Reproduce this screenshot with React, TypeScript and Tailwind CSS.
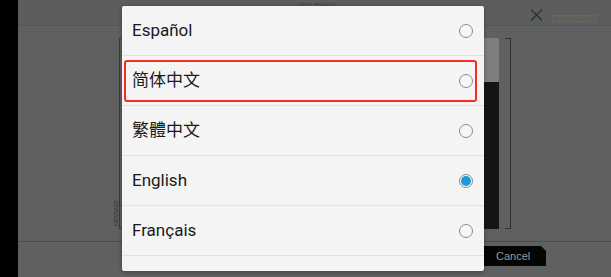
import React from "react";

const langs = [
  { label: "Español", selected: false },
  { label: "简体中文", selected: false, highlight: true },
  { label: "繁體中文", selected: false },
  { label: "English", selected: true },
  { label: "Français", selected: false },
];

function Radio({ selected }: { selected: boolean }) {
  return (
    <span className="w-[14px] h-[14px] rounded-full border border-[#8c8c8c] bg-[#f7f7f7] flex items-center justify-center shrink-0">
      {selected && <span className="w-[10px] h-[10px] rounded-full bg-[#1b9bd7]" />}
    </span>
  );
}

export default function App() {
  return (
    <div
      className="relative w-[611px] h-[277px] overflow-hidden flex"
      style={{ fontFamily: 'Roboto, "Noto Sans CJK SC", sans-serif' }}
    >
      <div className="w-[18px] h-full bg-black shrink-0" />
      <div className="flex-1 h-full flex flex-col bg-[#5f6161]">
        <div className="h-[26px] border-b border-[#545656] bg-[#5c5e5e] relative shrink-0">
          <span className="absolute left-[280px] top-[2px] text-[5px] text-[#3f4141] tracking-tight">DRIZZLEBANDCO</span>
          <svg className="absolute left-[512px] top-[9px]" width="13" height="12" viewBox="0 0 13 12">
            <path d="M1 0.5 L12 11.5 M12 0.5 L1 11.5" stroke="#2c2e2e" strokeWidth="1.1" fill="none" />
          </svg>
          <span className="absolute left-[534px] top-[15px] w-[45px] h-[7px] border border-[#6e6552] text-[5px] leading-[5px] text-[#6e6552] flex items-center justify-center">DRIZZLEBANDCO</span>
        </div>
        <div className="h-[216px] border-b border-[#4b4d4d] pt-[12px] pl-[101px] shrink-0">
          <div className="relative w-[392px] h-[191px] border-l border-[#3a3c3c] flex">
            <span className="absolute left-[-7px] top-[162px] text-[6px] leading-[6px] text-[#353737] [writing-mode:vertical-rl] rotate-180 tracking-tight">MESSAGE</span>
            <div className="absolute left-0 top-0 w-[5px] border-t border-[#3a3c3c]" />
            <div className="absolute left-0 bottom-0 w-[5px] border-b border-[#3a3c3c]" />
            <div className="ml-auto mr-[11px] w-[60px] h-full flex flex-col">
              <div className="h-[44px] bg-[#7d7f7f]" />
              <div className="flex-1 bg-[#141414]" />
            </div>
            <div className="w-[1px] h-full bg-[#2f3131]" />
            <div className="absolute right-0 top-0 w-[6px] border-t border-[#2f3131]" />
            <div className="absolute right-0 bottom-0 w-[6px] border-b border-[#2f3131]" />
          </div>
        </div>
        <div className="flex-1 pt-[4px] pl-[465px]">
          <div
            className="w-[63px] h-[20px] bg-[#050505] flex items-center pl-[13px] text-[11px] text-[#9a9a9a]"
            style={{ clipPath: "polygon(0 0, 58px 0, 63px 5px, 63px 100%, 0 100%)", fontFamily: '"Liberation Sans", sans-serif' }}
          >
            Cancel
          </div>
        </div>
      </div>

      <div className="absolute left-[122px] top-[6px] w-[362px] h-[265px] bg-[#f4f4f4] rounded-[2px] shadow-[0_1px_4px_rgba(0,0,0,0.35)] overflow-hidden flex flex-col">
        {langs.map((l) => (
          <div
            key={l.label}
            className="relative h-[50px] shrink-0 border-b border-[#e2e2e2] flex items-center justify-between pl-[10px] pr-[11px]"
          >
            <span className="text-[17px] text-[#1a1a1a]">{l.label}</span>
            <Radio selected={l.selected} />
            {l.highlight && (
              <div className="absolute left-[2px] top-[4px] w-[353px] h-[42px] border-2 border-[#fb2b20] rounded-[3px]" />
            )}
          </div>
        ))}
        <div className="h-[50px] shrink-0" />
      </div>
    </div>
  );
}
